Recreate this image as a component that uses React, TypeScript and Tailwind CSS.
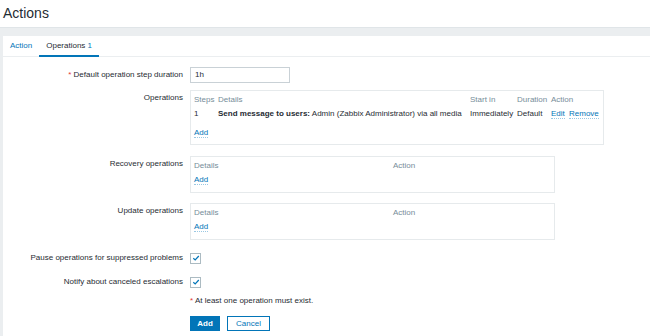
import React from "react";

const font = { fontFamily: '"Liberation Sans", Arial, sans-serif' };

function Check() {
  return (
    <div className="w-[11px] h-[11px] border border-[#acbbc2] bg-white flex items-center justify-center">
      <svg width="8" height="8" viewBox="0 0 8 8">
        <path d="M1.3 4.2 L3.2 6 L6.8 2" fill="none" stroke="#0275b8" strokeWidth="1.2" />
      </svg>
    </div>
  );
}

function Link({ children, className = "" }: { children: React.ReactNode; className?: string }) {
  return <span className={"text-[#0275b8] border-b border-dotted border-[#0275b8]/40 " + className}>{children}</span>;
}

function Row({ label, children, className = "", top = false, req = false }: { label: string; children: React.ReactNode; className?: string; top?: boolean; req?: boolean }) {
  return (
    <div className={"flex " + (top ? "items-start " : "items-center ") + className}>
      <div className={"w-[187px] shrink-0 text-right pr-[7px] leading-[12px] " + (top ? "pt-[2px]" : "")}>
        {req && <span className="text-[#e33734]">* </span>}
        {label}
      </div>
      {children}
    </div>
  );
}

export default function App() {
  return (
    <div className="w-[650px] h-[336px] bg-white text-[#1f2c33] text-[8px] overflow-hidden" style={font}>
      <div className="h-[27px] pl-[3px] pt-[5px] text-[14px] leading-[16px]">Actions</div>
      <div className="h-[309px] bg-[#ebeef0] border-t border-[#e0e5e8] pl-[3px] pt-[8px]">
        <div className="bg-white h-full">
          <div className="flex h-[21px] border-b border-[#ebeef0] leading-[12px]">
            <div className="px-[7px] pt-[4px] text-[#0275b8]">Action</div>
            <div className="px-[7px] pt-[4px] border-b-[2px] border-[#0275b8] h-[21px]">
              Operations <span className="text-[#0275b8]">1</span>
            </div>
          </div>

          <Row label="Default operation step duration" req className="mt-[10px]">
            <div className="w-[100px] h-[16px] border border-[#c9d1d6] pl-[4px] leading-[14px]">1h</div>
          </Row>

          <Row label="Operations" top className="mt-[7px]">
            <div className="w-[414px] h-[55px] border border-[#e6eaec] px-[3px] pt-[3px] leading-[12px]">
              <div className="grid grid-cols-[24px_252px_47px_34px_auto] text-[#768d99]">
                <div>Steps</div>
                <div>Details</div>
                <div>Start in</div>
                <div>Duration</div>
                <div>Action</div>
              </div>
              <div className="grid grid-cols-[24px_252px_47px_34px_auto] mt-[2px] whitespace-nowrap">
                <div>1</div>
                <div>
                  <span className="font-bold">Send message to users:</span> Admin (Zabbix Administrator) via all media
                </div>
                <div>Immediately</div>
                <div>Default</div>
                <div>
                  <Link>Edit</Link> <Link className="ml-[2px]">Remove</Link>
                </div>
              </div>
              <div className="mt-[7px]">
                <Link>Add</Link>
              </div>
            </div>
          </Row>

          <Row label="Recovery operations" top className="mt-[11px]">
            <div className="w-[365px] h-[37px] border border-[#e6eaec] px-[3px] pt-[3px] leading-[12px]">
              <div className="grid grid-cols-[199px_auto] text-[#768d99]">
                <div>Details</div>
                <div>Action</div>
              </div>
              <div className="mt-[2px]">
                <Link>Add</Link>
              </div>
            </div>
          </Row>

          <Row label="Update operations" top className="mt-[10px]">
            <div className="w-[365px] h-[37px] border border-[#e6eaec] px-[3px] pt-[3px] leading-[12px]">
              <div className="grid grid-cols-[199px_auto] text-[#768d99]">
                <div>Details</div>
                <div>Action</div>
              </div>
              <div className="mt-[2px]">
                <Link>Add</Link>
              </div>
            </div>
          </Row>

          <Row label="Pause operations for suppressed problems" className="mt-[12px] h-[12px]">
            <Check />
          </Row>

          <Row label="Notify about canceled escalations" className="mt-[12px] h-[12px]">
            <Check />
          </Row>

          <div className="mt-[7px] pl-[187px] leading-[12px]">
            <span className="text-[#e33734]">*</span> At least one operation must exist.
          </div>

          <div className="mt-[9px] pl-[187px] flex gap-[7px]">
            <div className="w-[30px] h-[15px] bg-[#0275b8] text-white font-bold flex items-center justify-center border border-[#0275b8]">Add</div>
            <div className="w-[43px] h-[15px] bg-white text-[#0275b8] flex items-center justify-center border border-[#0275b8]">Cancel</div>
          </div>
        </div>
      </div>
    </div>
  );
}
